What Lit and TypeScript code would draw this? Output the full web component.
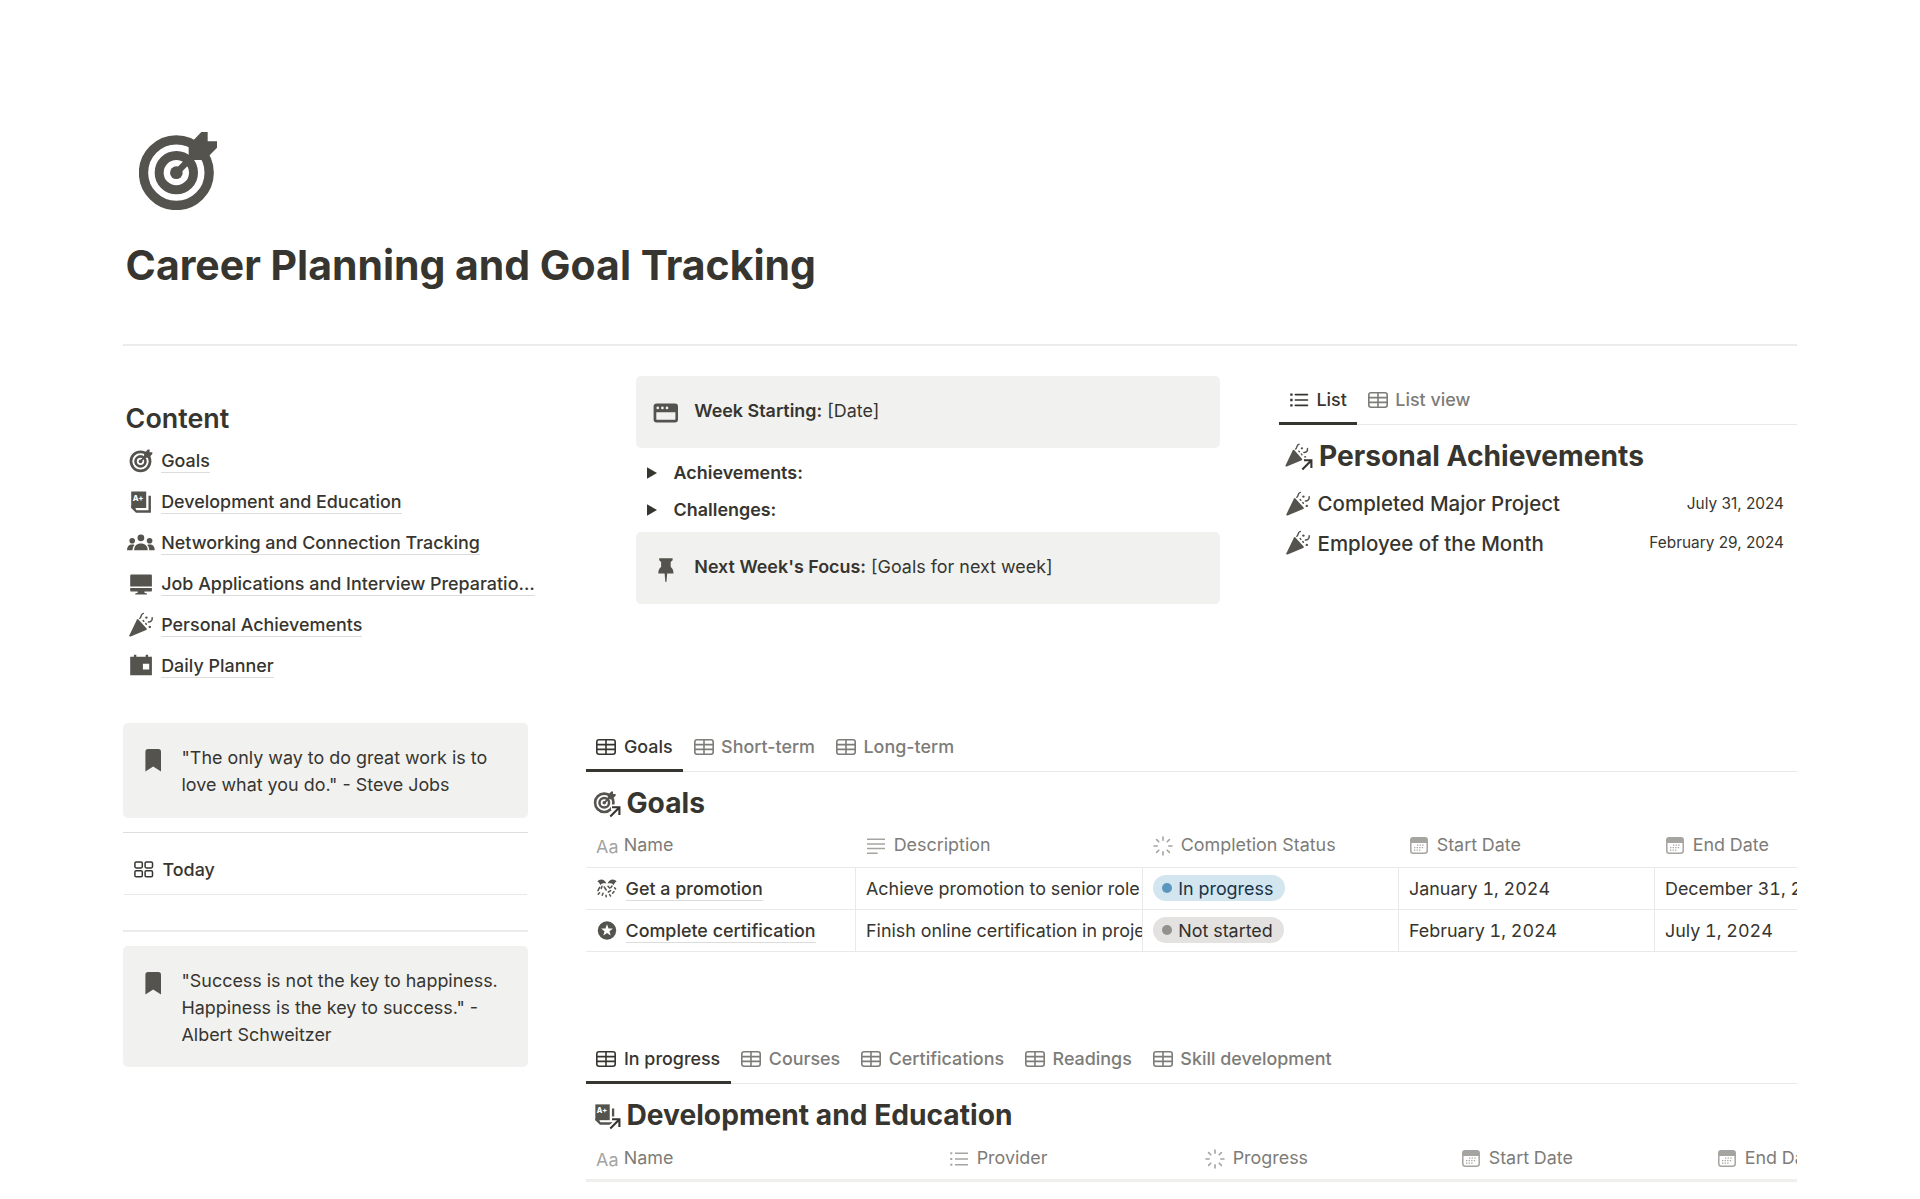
import { LitElement, html, css, svg } from "lit";
import type { SVGTemplateResult, TemplateResult } from "lit";
import { customElement, property } from "lit/decorators.js";

const bullseye = svg`<circle cx="200" cy="188" r="98.5" fill="none" stroke="currentColor" stroke-width="28"/>
  <circle cx="200" cy="188" r="51.5" fill="none" stroke="currentColor" stroke-width="27"/>
  <circle cx="200" cy="188" r="19"/>
  <path d="M200 188L256 132" stroke="currentColor" stroke-width="19"/>
  <path d="M237 106L275 66H294V94H322V113L286 150H237Z"/>`;

/* Glyphs on a 28-unit square, filled with currentColor. */
const glyphs: Record<string, SVGTemplateResult> = {
  target: svg`<g transform="translate(-5.9 -3.9) scale(.097)">${bullseye}</g>`,
  book: svg`<path d="M4.2 3.5H19.2V20H4.2Z"/>
    <path d="M21.5 7.8H23.9V24.7H9L4.2 20V18.5H7.5L9.5 22.2H21.5Z"/>
    <text x="5.7" y="12.6" font-family="Inter, sans-serif" font-size="7.6" font-weight="800" fill="#fff">A+</text>`,
  people: svg`<circle cx="13.9" cy="8.8" r="3.4"/><circle cx="5.2" cy="11.7" r="2.8"/><circle cx="22.6" cy="11.7" r="2.8"/>
    <path d="M7.1 21.2c0-4.4 2.6-6.8 6.8-6.8s6.8 2.4 6.8 6.8z"/>
    <path d="M.1 21.2c0-3.6 1.8-5.6 5-5.6.9 0 1.8.1 2.5.5C6.2 17.3 5.7 19 5.5 21.2z"/>
    <path d="M27.7 21.2c0-3.6-1.8-5.6-5-5.6-.9 0-1.8.1-2.5.5 1.4 1.2 1.9 2.9 2.1 5.1z"/>`,
  monitor: svg`<path d="M4.4 4.5H23.7Q24.9 4.5 24.9 5.7V16.4H3.2V5.7Q3.2 4.5 4.4 4.5Z"/>
    <path d="M3.2 18H24.9V20.4Q24.9 21.6 23.7 21.6H17.4V22.8L19.9 23.6V24.6H8.2V23.6L10.7 22.8V21.6H4.4Q3.2 21.6 3.2 20.4Z"/>`,
  party: svg`<path d="M10 8.4Q10.6 7.6 11.4 8.4L19.6 17.6Q20.2 18.6 19.2 19.1L3.6 25.4Q2 25.7 2.4 24.2Z"/>
    <g fill="none" stroke="currentColor" stroke-width="1.5" stroke-linecap="round">
    <path d="M12.8 7.2C14.6 7 13 3.4 16.4 2.4"/><path d="M25.2 6.8C25.6 9.6 23.4 11.2 21.4 11"/>
    <path d="M16.2 9.6L16.8 10.2M18.8 12.6L19.4 13.2"/></g>
    <circle cx="19.4" cy="6.6" r="1.2"/><circle cx="22.8" cy="15.9" r="1.2"/>`,
  planner: svg`<path fill-rule="evenodd" d="M3.2 4.8H6.9V2.8H9.3V4.8H18.7V2.8H21.1V4.8H24.9V23.3H3.2ZM15.9 11.8V17.5H22.2V11.8Z"/>`,
  windowpane: svg`<path fill-rule="evenodd" d="M4.6 4.500H23A3 3 0 0 1 26 7.500V20.500A3 3 0 0 1 23 23.500H4.600A3 3 0 0 1 1.600 20.500V7.500A3 3 0 0 1 4.600 4.500ZM4.300 13.300V19.900Q4.300 20.800 5.200 20.800H22.500Q23.400 20.800 23.400 19.900V13.300Z"/>
    <g fill="#f1f1ef"><circle cx="5.800" cy="8.900" r="1.350"/><circle cx="10.400" cy="8.900" r="1.350"/><circle cx="15" cy="8.900" r="1.350"/></g>`,
  pin: svg`<path d="M7.200 3.200H20.600V5.200L18.700 7V12C20.500 13.200 21.500 15 21.500 18.600H15.200L14.500 26.500L13.900 27.200L13.300 26.500L12.600 18.600H6.300C6.300 15 7.300 13.200 9.100 12V7L7.200 5.200Z"/>`,
  bookmark: svg`<path d="M6.400 25.500V5.700A2.700 2.700 0 0 1 9.100 3H19.300A2.700 2.700 0 0 1 22 5.700V25.500L14.200 20.500Z"/>`,
};

@customElement("page-glyph")
class PageGlyph extends LitElement {
  static styles = css`
    :host { display: block; flex: none; width: 28px; height: 28px; color: #55534e; }
    svg { display: block; width: 100%; height: 100%; overflow: visible; }
    .arrow { color: #37352f; }
  `;
  @property() name = "";
  @property({ type: Boolean }) linked = false;
  render() {
    return html`<svg viewBox="0 0 28 28" fill="currentColor">
      ${this.linked
        ? svg`<g transform="translate(-1.7 -1) scale(.96)">${glyphs[this.name]}</g>
          <g class="arrow" fill="none"><path d="M16.500 27L26.400 17.300M18 17.300H26.400V25.500" stroke="#fff" stroke-width="5.400"/>
          <path d="M17.300 26.500L26 17.800M19 17.300H26.400V24.900" stroke="currentColor" stroke-width="2.100"/></g>`
        : glyphs[this.name]}
    </svg>`;
  }
}

/* Small line icons for tabs and column headers. */
const lineIcons: Record<string, TemplateResult> = {
  table: html`<svg width="20" height="16" viewBox="0 0 20 16" fill="none" stroke="currentColor" stroke-width="1.600">
    <rect x=".8" y=".8" width="18.400" height="14.400" rx="2.200"/><path d="M1 5.600H19M1 10.400H19M10 1V15"/></svg>`,
  list: html`<svg width="20" height="16" viewBox="0 0 20 16" fill="none" stroke="currentColor" stroke-width="1.600">
    <path d="M6.300 2.600H18.500M6.300 8H18.500M6.300 13.400H18.500" stroke-linecap="round"/>
    <path d="M1.200 2.600H3.600M1.200 8H3.600M1.200 13.400H3.600" stroke-width="2.300"/></svg>`,
  board: html`<svg width="20" height="17" viewBox="0 0 20 17" fill="none" stroke="currentColor" stroke-width="1.500">
    <rect x=".9" y=".9" width="7.400" height="6" rx="1.300"/><rect x="11.100" y=".9" width="7.400" height="6" rx="1.300"/>
    <rect x=".9" y="9.700" width="7.400" height="6" rx="1.300"/><rect x="11.100" y="9.700" width="7.400" height="6" rx="1.300"/></svg>`,
  lines: html`<svg class="narrow" width="18" height="18" viewBox="0 0 18 18" fill="none" stroke="currentColor" stroke-width="1.500">
    <path d="M0 2.200H18M0 7H18M0 11.600H18M0 16.200H10.600"/></svg>`,
  bullets: html`<svg class="narrow" width="18" height="16" viewBox="0 0 18 16" fill="none" stroke="currentColor" stroke-width="1.400">
    <path d="M5 2.200H18M5 8H18M5 13.800H18"/><path d="M.3 2.200H2.300M.3 8H2.300M.3 13.800H2.300" stroke-width="2"/></svg>`,
  status: html`<svg width="20" height="20" viewBox="-10 -10 20 20" fill="none" stroke="currentColor" stroke-width="1.600" stroke-linecap="round">
    <path d="M0-9V-5.800M0 9V5.800M-9 0H-5.800M9 0H5.800M-6.400-6.400L-4.200-4.200M6.400-6.400L4.200-4.200M-6.400 6.400L-4.200 4.200M6.400 6.400L4.200 4.200"/></svg>`,
  date: html`<svg class="narrow" width="18" height="17" viewBox="0 0 18 17" fill="none">
    <rect x=".8" y=".8" width="16.400" height="15.400" rx="2.400" stroke="currentColor" stroke-width="1.500"/>
    <path d="M.5 6V3Q.5.500 3 .5H15Q17.500.500 17.500 3V6Z" fill="currentColor"/>
    <path d="M7 8.200H14.500M4 10.700H14.500M4 13.200H11" stroke="currentColor" stroke-width="1.200" stroke-dasharray="1.300 1.300"/></svg>`,
  title: html`<span class="aa">Aa</span>`,
};

const shared = css`
  * { box-sizing: border-box; }
  .aa { margin-top: 3px; font-size: 17.900px; letter-spacing: .2px; color: #a5a4a0; width: 20px; white-space: nowrap; }
  svg { display: block; flex: none; }
`;

@customElement("view-tabs")
class ViewTabs extends LitElement {
  static styles = [shared, css`
    :host { display: block; }
    .tabs { display: flex; height: 49px; border-bottom: 1px solid #e9e9e7; }
    .tab { display: flex; align-items: center; gap: 7.500px; height: 49px; padding: 1px 10.600px 0 10.400px;
      border-bottom: 3px solid transparent; font-size: 17.920px; font-weight: 500; color: #7d7c78; white-space: nowrap; }
    .tab.on { color: #37352f; border-bottom-color: #37352f; }
  `];
  @property({ attribute: false }) tabs: [string, string][] = [];
  render() {
    return html`<div class="tabs">${this.tabs.map(([icon, label], i) =>
      html`<div class="tab ${i === 0 ? "on" : ""}">${lineIcons[icon]}<span>${label}</span></div>`)}</div>`;
  }
}

@customElement("call-out")
class CallOut extends LitElement {
  static styles = css`
    :host { display: block; }
    .box { display: flex; align-items: flex-start; gap: 14.500px; box-sizing: border-box; height: 100%; padding: 21px 16px 20px 16px;
      background: #f1f1ef; border-radius: 5px; }
    page-glyph { margin-top: 1.500px; }
    .text { flex: 1; font-size: 17.920px; line-height: 27px; }
  `;
  @property() icon = "";
  render() {
    return html`<div class="box"><page-glyph name=${this.icon}></page-glyph><div class="text"><slot></slot></div></div>`;
  }
}

const links: [string, string][] = [
  ["target", "Goals"],
  ["book", "Development and Education"],
  ["people", "Networking and Connection Tracking"],
  ["monitor", "Job Applications and Interview Preparatio…"],
  ["party", "Personal Achievements"],
  ["planner", "Daily Planner"],
];

const laurel = html`<svg width="20" height="19" viewBox="0 0 20 19" fill="currentColor">
  <path d="M.3 2.600C2.500-.4 7.500-.6 9.400 4.600C6.600 4 4.400 4.600 3.300 6.300C2.800 4.600 1.800 3.200.3 2.600Z"/>
  <path d="M19.700 2.600C17.500-.4 12.500-.6 10.600 4.600C13.400 4 15.600 4.600 16.700 6.300C17.200 4.600 18.200 3.200 19.700 2.600Z"/>
  <g fill="none" stroke="currentColor" stroke-width="1.500" stroke-linecap="round">
  <path d="M2.600 8.400L1 11.600M5 7.200L4.200 9.400M2.600 13.800L1.200 15.200M7.200 8L9.200 11M11 7.200L12.600 9M15 7L13.800 8.600M17.600 8.800L18.600 10M11.400 13L13.600 11.600M17 12.600L15.600 14.200M6 14.200L5.200 16.200M9 16.200L9.200 17.800M12.600 15.600L13.600 17"/></g></svg>`;
const star = html`<svg width="20" height="19" viewBox="-10 -9.500 20 19"><circle r="9.200" fill="currentColor"/>
  <path fill="#fff" d="M0-6.200L1.550-2.100L5.900-1.900L2.500.8L3.650 5L0 2.600L-3.650 5L-2.500.8L-5.900-1.900L-1.550-2.100Z"/></svg>`;

const goals = [
  { icon: laurel, name: "Get a promotion", description: "Achieve promotion to senior role", status: "In progress", tone: "blue", start: "January 1, 2024", end: "December 31, 2024" },
  { icon: star, name: "Complete certification", description: "Finish online certification in project", status: "Not started", tone: "gray", start: "February 1, 2024", end: "July 1, 2024" },
];

@customElement("app-root")
class AppRoot extends LitElement {
  static styles = [shared, css`
    :host { display: block; height: 1199px; overflow: hidden; background: #fff; color: #37352f;
      font-family: Inter, "Liberation Sans", sans-serif; font-size: 17.920px; line-height: 27px; }
    .page { width: 1920px; padding: 132px 123px 0; }
    .cover-icon { width: 78px; height: 78px; margin-left: 16.300px; color: #55534e; }
    h1 { margin: 30.500px 0 0 2.600px; font-size: 40.960px; line-height: 49.150px; font-weight: 700; }
    .rule { height: 2px; background: #ebebea; }
    .rule.head { margin-top: 54.350px; }
    .rule.thin { height: 1px; background: #dededc; margin-top: 14px; }

    .upper { display: grid; grid-template-columns: 415px 97.800px 584px 58.800px 1fr; height: 377px; }
    .contents { grid-column: 1; padding-top: 55px; }
    .week { grid-column: 3; padding-top: 30px; }
    .wins { grid-column: 5; padding-top: 30px; }
    h2 { margin: 0 0 4px 2.600px; font-size: 26.880px; line-height: 35px; font-weight: 600; }
    .link { display: flex; gap: 6.400px; height: 41px; padding-left: 3.800px; }
    .link page-glyph { margin-top: 6.500px; }
    .link span { margin-top: 9px; height: 24px; line-height: 23px; font-weight: 500; border-bottom: 1px solid #dcdcda; white-space: nowrap; }

    .week call-out { height: 72px; }
    .toggles { padding: 6px 0 4.300px; }
    .toggle { display: flex; align-items: center; gap: 16.500px; height: 37px; padding-left: 11.300px; font-weight: 600; }
    b { font-weight: 600; }

    .db-title { display: flex; gap: 5.700px; height: 36px; margin: 13px 0 0 6.800px; font-size: 28.160px; line-height: 36px; font-weight: 700; white-space: nowrap; }
    .db-title page-glyph { margin-top: 5.300px; }
    .win-list { padding-top: 9.800px; }
    .win { display: flex; align-items: center; height: 39.600px; padding: 0 13px 0 5.500px; font-size: 20.480px; font-weight: 500; }
    .win .name { flex: 1; margin-left: 5.500px; }
    .win .date { font-size: 15.360px; font-weight: 400; margin-top: -1px; }

    .lower { display: grid; grid-template-columns: 404.500px 1211px; column-gap: 58.500px; }
    .today { display: flex; align-items: center; gap: 8.500px; height: 61px; margin: 0 1px; padding: 13px 0 0 10px; font-weight: 500; border-bottom: 1px solid transparent; }
    .line { height: 1px; margin: 0 1px 35px; background: #e9e9e7; }
    .quote1 { height: 95px; }
    .quote2 { height: 121px; margin-top: 14px; }

    .table { overflow: hidden; margin-top: 1px; }
    .row { display: grid; grid-template-columns: 270px 287px 256px 256px 256px; height: 42px; border-top: 1px solid #e9e9e7; font-variant-numeric: tabular-nums; }
    .row.top { height: 45px; border-top: 0; color: #7d7c78; }
    .cell { display: flex; align-items: center; padding-left: 10px; white-space: nowrap; overflow: hidden; border-right: 1px solid #e9e9e7; }
    .row.top .cell { border-right: 0; gap: 7.700px; }
    .row.top .cell svg { color: #a5a4a0; margin-top: 2px; }
    .row.top .cell .narrow { margin-left: .8px; margin-right: 1.200px; }
    .end { height: 1px; background: #e9e9e7; }
    .name-cell { gap: 9px; padding-left: 10.500px; color: #55534e; }
    .name-cell span { height: 24px; margin-top: 1px; line-height: 23px; font-weight: 500; color: #37352f; border-bottom: 1.500px solid #dcdcda; }
    .pill { display: flex; align-items: center; gap: 5.800px; height: 26px; margin-top: -1px; padding: 0 11.500px 0 9.300px; border-radius: 13px; }
    .pill i { width: 10.200px; height: 10.200px; border-radius: 50%; }
    .pill.blue { background: #d3e5ef; color: #183347; }
    .pill.blue i { background: #5b97bd; }
    .pill.gray { background: #e3e2e0; color: #32302c; }
    .pill.gray i { background: #91918e; }

    .second { margin-top: 83px; }
    .second .table { margin-top: 3px; }
    .second .row.top { grid-template-columns: 353px 256px 256px 256px 256px; height: 43px; }
    .second .end { height: 3px; background: #efefee; }
  `];

  head(cols: [string, string][]) {
    return html`<div class="row top">${cols.map(([icon, label]) =>
      html`<div class="cell">${lineIcons[icon]}<span>${label}</span></div>`)}</div>`;
  }

  render() {
    return html`<main class="page">
      <svg class="cover-icon" viewBox="88 66 234 234" fill="currentColor">${bullseye}</svg>
      <h1>Career Planning and Goal Tracking</h1>
      <div class="rule head"></div>

      <section class="upper">
        <nav class="contents">
          <h2>Content</h2>
          ${links.map(([icon, label]) => html`<div class="link"><page-glyph name=${icon}></page-glyph><span>${label}</span></div>`)}
        </nav>
        <div class="week">
          <call-out icon="windowpane"><b>Week Starting:</b> [Date]</call-out>
          <div class="toggles">${["Achievements:", "Challenges:"].map((t) => html`<div class="toggle">
            <svg width="10" height="12" viewBox="0 0 10 12"><path d="M0 .3L10 6L0 11.700Z" fill="currentColor"/></svg><span>${t}</span></div>`)}
          </div>
          <call-out icon="pin"><b>Next Week's Focus:</b> [Goals for next week]</call-out>
        </div>
        <div class="wins">
          <view-tabs .tabs=${[["list", "List"], ["table", "List view"]]}></view-tabs>
          <div class="db-title"><page-glyph name="party" linked></page-glyph><span>Personal Achievements</span></div>
          <div class="win-list">${[["Completed Major Project", "July 31, 2024"], ["Employee of the Month", "February 29, 2024"]].map(([n, d]) =>
            html`<div class="win"><page-glyph name="party"></page-glyph><span class="name">${n}</span><span class="date">${d}</span></div>`)}
          </div>
        </div>
      </section>

      <section class="lower">
        <aside>
          <call-out class="quote1" icon="bookmark">"The only way to do great work is to love what you do." - Steve Jobs</call-out>
          <div class="rule thin"></div>
          <div class="today">${lineIcons.board}<span>Today</span></div>
          <div class="line"></div>
          <div class="rule"></div>
          <call-out class="quote2" icon="bookmark">"Success is not the key to happiness. Happiness is the key to success." - Albert Schweitzer</call-out>
        </aside>
        <div>
          <view-tabs .tabs=${[["table", "Goals"], ["table", "Short-term"], ["table", "Long-term"]]}></view-tabs>
          <div class="db-title"><page-glyph name="target" linked></page-glyph><span>Goals</span></div>
          <div class="table">
            ${this.head([["title", "Name"], ["lines", "Description"], ["status", "Completion Status"], ["date", "Start Date"], ["date", "End Date"]])}
            ${goals.map((g) => html`<div class="row">
              <div class="cell name-cell">${g.icon}<span>${g.name}</span></div>
              <div class="cell">${g.description}</div>
              <div class="cell"><div class="pill ${g.tone}"><i></i>${g.status}</div></div>
              <div class="cell">${g.start}</div>
              <div class="cell">${g.end}</div>
            </div>`)}
            <div class="end"></div>
          </div>
          <div class="second">
            <view-tabs .tabs=${["In progress", "Courses", "Certifications", "Readings", "Skill development"].map((t) => ["table", t])}></view-tabs>
            <div class="db-title"><page-glyph name="book" linked></page-glyph><span>Development and Education</span></div>
            <div class="table">
              ${this.head([["title", "Name"], ["bullets", "Provider"], ["status", "Progress"], ["date", "Start Date"], ["date", "End Date"]])}
              <div class="end"></div>
            </div>
          </div>
        </div>
      </section>
    </main>`;
  }
}
